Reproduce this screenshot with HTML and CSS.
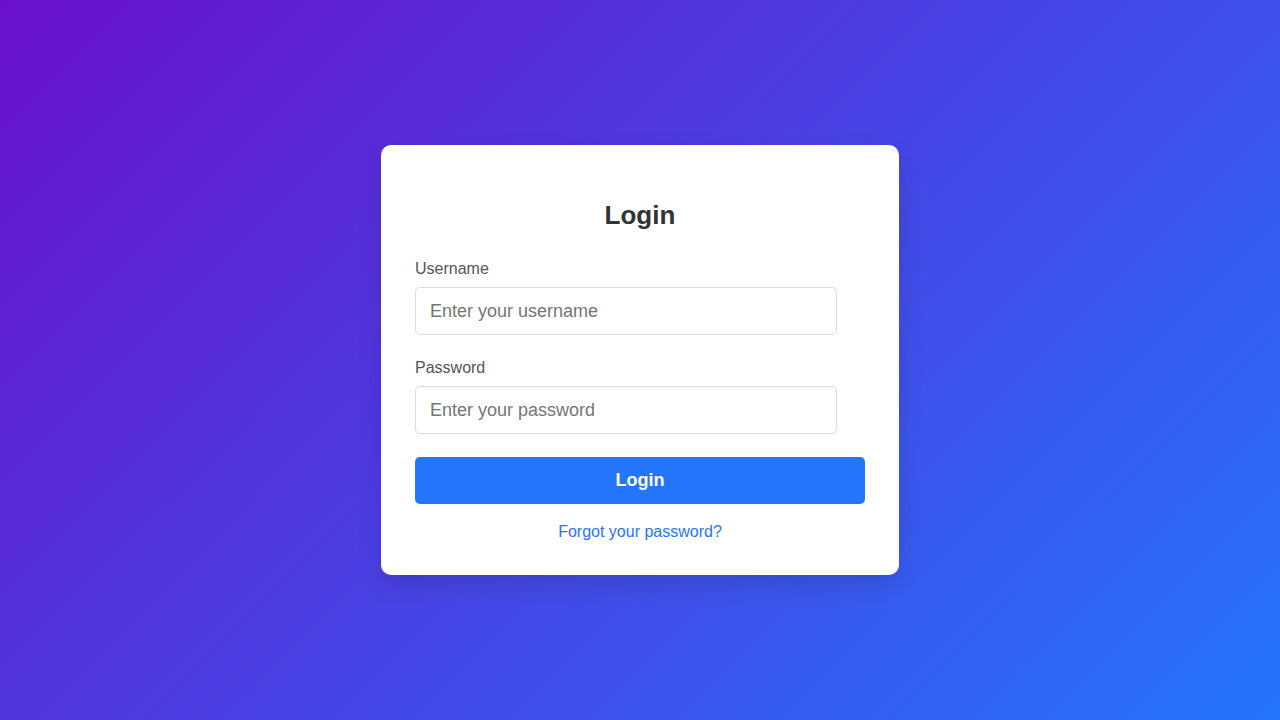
FILE: index.html
```html
<!DOCTYPE html>
<html lang="en">
<head>
<meta charset="utf-8">
<title>Login</title>
<link rel="stylesheet" href="styles.css">
</head>
<body>
  <div class="card">
    <h2 class="title">Login</h2>
    <form class="form">
      <div class="group">
        <label class="label" for="username">Username</label>
        <input class="input" id="username" type="text" placeholder="Enter your username">
      </div>
      <div class="group">
        <label class="label" for="password">Password</label>
        <input class="input" id="password" type="password" placeholder="Enter your password">
      </div>
      <button class="btn" type="button">Login</button>
    </form>
    <a class="link" href="#">Forgot your password?</a>
  </div>
</body>
</html>
```
FILE: styles.css
```css
html, body {
  margin: 0;
  padding: 0;
  height: 100%;
}
body {
  font-family: "Liberation Sans", Arial, sans-serif;
  background: linear-gradient(135deg, #6a11cb 0%, #2575fc 100%);
  display: flex;
  align-items: center;
  justify-content: center;
}
.card {
  width: 518px;
  box-sizing: border-box;
  background: #fff;
  border-radius: 10px;
  padding: 34px;
  box-shadow: 0 10px 25px rgba(0, 0, 0, 0.12);
  display: flex;
  flex-direction: column;
}
.title {
  margin: 21px 0 30px;
  font-size: 26px;
  line-height: 30px;
  font-weight: bold;
  color: #333;
  text-align: center;
}
.form {
  display: flex;
  flex-direction: column;
}
.group {
  display: flex;
  flex-direction: column;
  margin-bottom: 24px;
}
.group + .group {
  margin-bottom: 23px;
}
.label {
  font-size: 16px;
  line-height: 18px;
  color: #555;
  margin-bottom: 9px;
}
.input {
  width: 422px;
  height: 48px;
  box-sizing: border-box;
  padding: 0 14px;
  border: 1px solid #ddd;
  border-radius: 5px;
  font-family: "Liberation Sans", Arial, sans-serif;
  font-size: 18px;
  color: #333;
  outline: none;
}
.input::placeholder {
  color: #757575;
}
.btn {
  height: 47px;
  border: none;
  border-radius: 5px;
  background: #2575fc;
  color: #fff;
  font-family: "Liberation Sans", Arial, sans-serif;
  font-size: 18px;
  font-weight: bold;
  cursor: pointer;
}
.link {
  margin-top: 19px;
  text-align: center;
  font-size: 16px;
  line-height: 18px;
  color: #2575fc;
  text-decoration: none;
}
```
